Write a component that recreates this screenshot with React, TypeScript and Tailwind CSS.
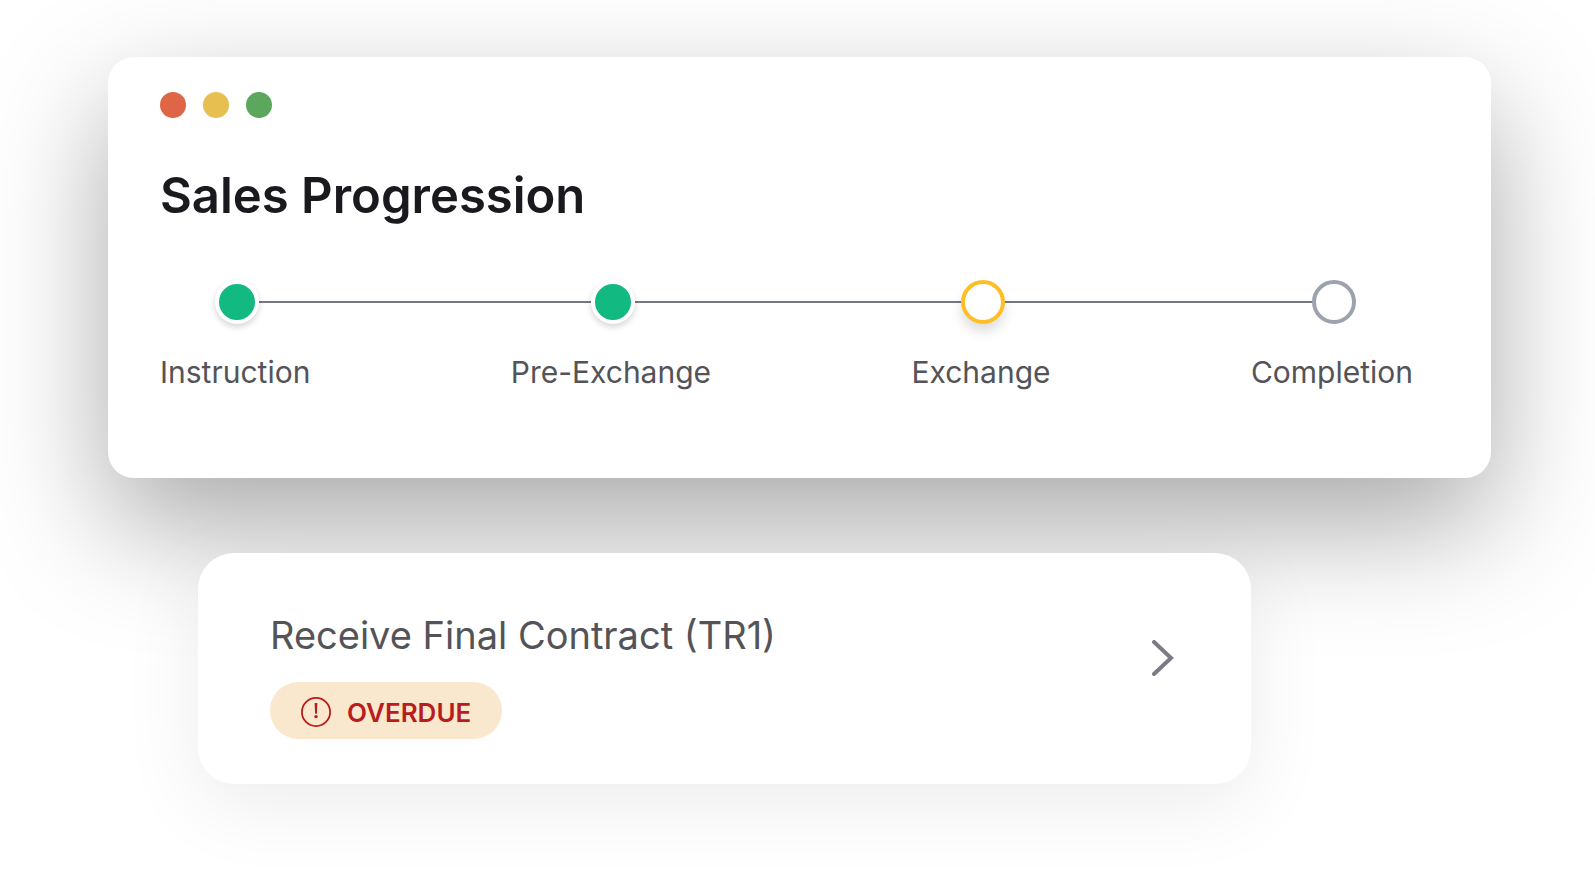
import React from "react";

type StepState = "done" | "current" | "upcoming";

const steps: { label: string; state: StepState }[] = [
  { label: "Instruction", state: "done" },
  { label: "Pre-Exchange", state: "done" },
  { label: "Exchange", state: "current" },
  { label: "Completion", state: "upcoming" },
];

const markerStyles: Record<StepState, string> = {
  done: "border-white bg-[#12b981] shadow-[0_3px_6px_rgba(0,0,0,0.17)]",
  current: "border-[#fdbf24] bg-white shadow-[0_8px_12px_rgba(0,0,0,0.13)]",
  upcoming: "border-[#9ca3af] bg-white",
};

function WindowDots() {
  return (
    <div className="flex gap-[17px]" aria-hidden="true">
      <span className="size-[26px] rounded-full bg-[#de6546]" />
      <span className="size-[26px] rounded-full bg-[#e6bf50]" />
      <span className="size-[26px] rounded-full bg-[#5ba75d]" />
    </div>
  );
}

function Stepper() {
  return (
    <div className="relative mt-[52px]">
      {/* Track that runs behind the markers */}
      <div className="absolute top-[21px] right-[80px] left-[75px] h-[2px] bg-[#737786]" />
      <ol className="relative flex justify-between">
        {steps.map((step) => (
          <li key={step.label} className="flex flex-col items-center gap-7">
            <span
              className={`ml-1 size-11 rounded-full border-4 ${markerStyles[step.state]}`}
            />
            <span className="text-[30px] leading-10 text-[#535358]">
              {step.label}
            </span>
          </li>
        ))}
      </ol>
    </div>
  );
}

function OverdueBadge() {
  return (
    <span className="flex h-[57px] w-fit items-center gap-4 rounded-full bg-[#f9e8cd] px-[31px] pt-[3px] text-[26px] font-semibold text-[#b91c1c]">
      <svg className="size-[30px]" viewBox="0 0 30 30" fill="none" aria-hidden="true">
        <circle cx="15" cy="15" r="14.1" stroke="currentColor" strokeWidth="1.8" />
        <path d="M13.6 6h2.8l-.5 10.8h-1.8z" fill="currentColor" />
        <circle cx="15" cy="19.6" r="1.7" fill="currentColor" />
      </svg>
      OVERDUE
    </span>
  );
}

export default function App() {
  return (
    <main className="min-h-screen overflow-hidden bg-white pt-[57px] pr-[104px] pb-[102px] pl-[108px] font-['Inter',sans-serif]">
      <section className="rounded-[26px] bg-white pt-[35px] pr-[78px] pb-[86px] pl-[52px] shadow-[0_47px_120px_rgba(0,0,0,0.34)]">
        <WindowDots />
        <h1 className="mt-[46px] text-[49px] leading-[64px] font-semibold text-[#1a191e]">
          Sales Progression
        </h1>
        <Stepper />
      </section>

      <a
        href="#receive-final-contract"
        className="relative mt-[75px] mr-[240px] ml-[90px] flex items-start justify-between rounded-[36px] bg-white pt-[57px] pr-[77px] pb-[45px] pl-[72px] shadow-[0_20px_80px_rgba(0,0,0,0.08)]"
      >
        <div>
          <h2 className="mb-[22px] text-[38px] leading-[50px] text-[#535358]">
            Receive Final Contract (TR1)
          </h2>
          <OverdueBadge />
        </div>
        <svg className="mt-[30px] h-9 w-[23px]" viewBox="0 0 23 36" fill="none" aria-hidden="true">
          <path
            d="M3 2l17 16L3 34"
            stroke="#7b7b85"
            strokeWidth="4"
            strokeLinecap="round"
          />
        </svg>
      </a>
    </main>
  );
}
